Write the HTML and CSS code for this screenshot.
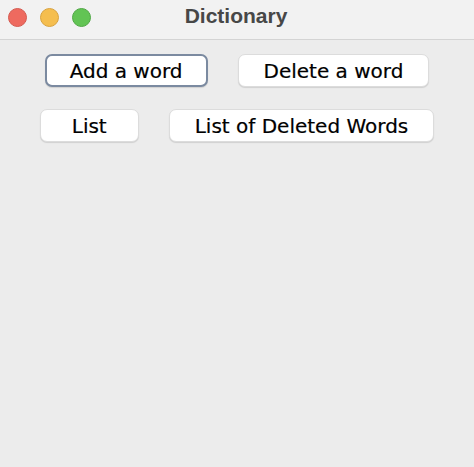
FILE: index.html
```html
<!DOCTYPE html>
<html>
<head>
<meta charset="utf-8">
<link rel="stylesheet" href="styles.css">
</head>
<body>
<div class="window">
  <div class="titlebar">
    <div class="lights">
      <span class="light red"></span>
      <span class="light yellow"></span>
      <span class="light green"></span>
    </div>
    <div class="title">Dictionary</div>
  </div>
  <div class="content">
    <div class="row">
      <button class="btn focused">Add a word</button>
      <button class="btn">Delete a word</button>
    </div>
    <div class="row">
      <button class="btn wide-min">List</button>
      <button class="btn">List of Deleted Words</button>
    </div>
  </div>
</div>
</body>
</html>
```
FILE: styles.css
```css
html, body {
  margin: 0;
  padding: 0;
  width: 474px;
  height: 467px;
  background: #ececec;
  overflow: hidden;
}
.window {
  display: flex;
  flex-direction: column;
  height: 467px;
}
.titlebar {
  position: relative;
  height: 40px;
  box-sizing: border-box;
  background: #f2f2f2;
  border-bottom: 1px solid #d4d4d4;
  display: flex;
  align-items: center;
  justify-content: center;
}
.lights {
  position: absolute;
  left: 8px;
  top: 8px;
  display: flex;
  gap: 13px;
}
.light {
  width: 19px;
  height: 19px;
  border-radius: 50%;
  box-sizing: border-box;
}
.red { background: #ee6a5f; border: 1px solid #d55a50; }
.yellow { background: #f5be4f; border: 1px solid #d9a33f; }
.green { background: #62c454; border: 1px solid #50a845; }
.title {
  font-family: "Liberation Sans", Arial, sans-serif;
  font-weight: bold;
  font-size: 21px;
  color: #474747;
  margin-top: -8px;
  margin-left: -2px;
}
.content {
  flex: 1;
  background: #ececec;
  padding-top: 14px;
  display: flex;
  flex-direction: column;
  gap: 22px;
}
.row {
  display: flex;
  justify-content: center;
  gap: 30px;
}
.btn {
  height: 33px;
  padding: 0 25px;
  box-sizing: border-box;
  background: #ffffff;
  border: 1px solid #dcdcdc;
  border-radius: 7px;
  box-shadow: 0 1px 1px rgba(0,0,0,0.12);
  font-family: "DejaVu Sans", sans-serif;
  font-size: 20px;
  color: #000000;
  line-height: 1;
  -webkit-text-stroke: 0.2px #000;
}
.focused {
  border: 2px solid #7b8aa0;
  padding: 0 23px;
}
.wide-min {
  min-width: 99px;
}
```
